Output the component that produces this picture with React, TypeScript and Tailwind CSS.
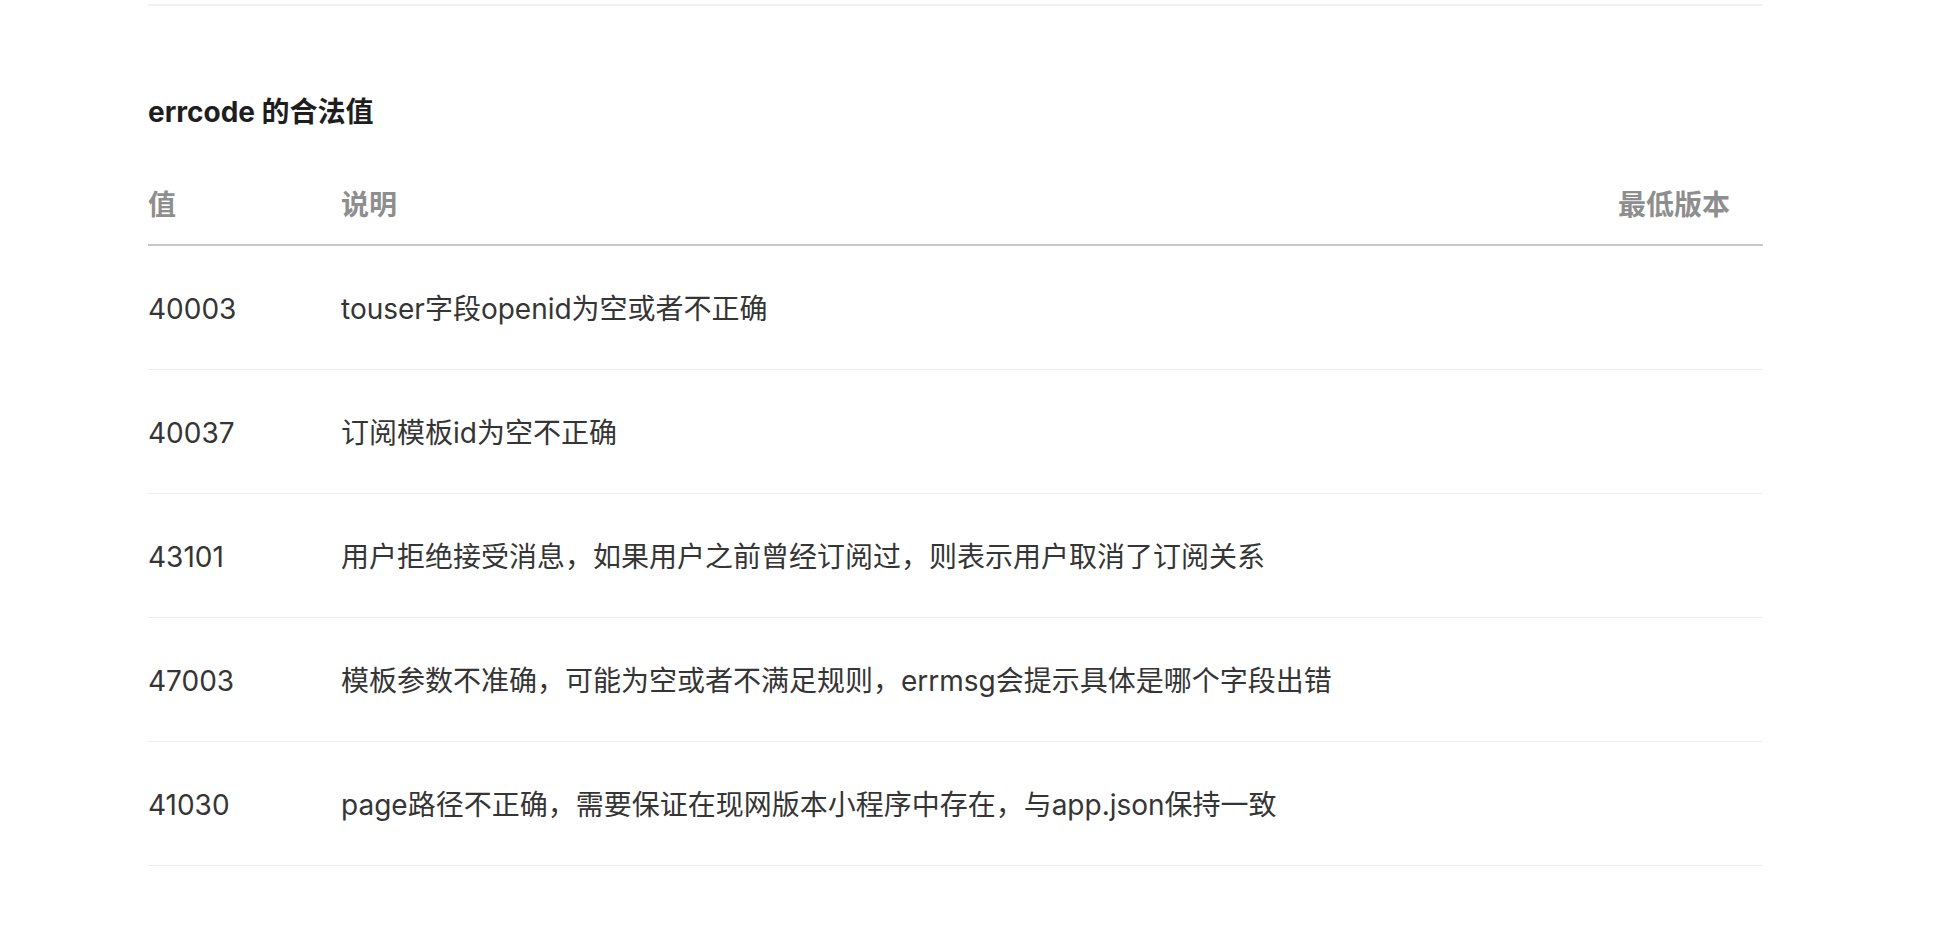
import React from "react";

const rows: [string, string][] = [
  ["40003", "touser字段openid为空或者不正确"],
  ["40037", "订阅模板id为空不正确"],
  ["43101", "用户拒绝接受消息，如果用户之前曾经订阅过，则表示用户取消了订阅关系"],
  ["47003", "模板参数不准确，可能为空或者不满足规则，errmsg会提示具体是哪个字段出错"],
  ["41030", "page路径不正确，需要保证在现网版本小程序中存在，与app.json保持一致"],
];

export default function App() {
  return (
    <div
      className="min-h-[952px] w-full bg-white pl-[148px]"
      style={{ fontFamily: 'Inter, "Noto Sans CJK SC", sans-serif' }}
    >
      <div className="w-[1615px]">
        <div className="h-[6px] border-b-2 border-[#f2f2f2]" />
        <h3 className="mt-[88px] text-[28px] font-bold leading-[36px] text-[#1e1e1e]">
          errcode 的合法值
        </h3>
        <table className="mt-[54px] w-full border-collapse">
          <thead>
            <tr className="border-b-2 border-[#c8c8c8]">
              <th className="w-[193px] p-0 pb-[18px] text-left text-[28px] font-semibold leading-[42px] text-[#8e8e8e]">
                值
              </th>
              <th className="p-0 pb-[18px] text-left text-[28px] font-semibold leading-[42px] text-[#8e8e8e]">
                说明
              </th>
              <th className="p-0 pb-[18px] pr-[33px] text-right text-[28px] font-semibold leading-[42px] text-[#8e8e8e]">
                最低版本
              </th>
            </tr>
          </thead>
          <tbody>
            {rows.map(([code, desc]) => (
              <tr key={code} className="border-b border-[#efefef]">
                <td className="p-0 pt-[42px] pb-[39px] text-[28px] leading-[42px] text-[#353535]">
                  {code}
                </td>
                <td className="p-0 pt-[42px] pb-[39px] text-[28px] leading-[42px] text-[#353535]">
                  {desc}
                </td>
                <td className="p-0 pt-[42px] pb-[39px] text-[28px] leading-[42px] text-[#353535]" />
              </tr>
            ))}
          </tbody>
        </table>
      </div>
    </div>
  );
}
